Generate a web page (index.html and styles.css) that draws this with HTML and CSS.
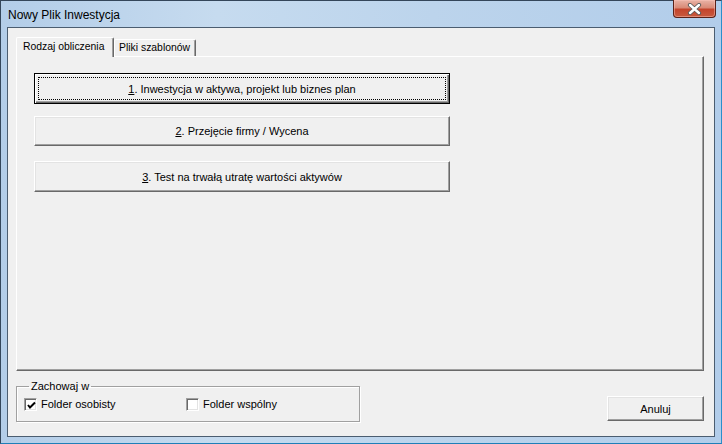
FILE: index.html
```html
<!DOCTYPE html>
<html lang="pl">
<head>
<meta charset="utf-8">
<title>Nowy Plik Inwestycja</title>
<link rel="stylesheet" href="styles.css">
</head>
<body>
<div class="window">
  <div class="titlebar">
    <span class="title">Nowy Plik Inwestycja</span>
  </div>
  <button class="close" aria-label="Zamknij">
    <svg width="17" height="12" viewBox="0 0 17 12">
      <path d="M4 2 L13 10 M13 2 L4 10" stroke="#5a5a5a" stroke-width="4.2" stroke-linecap="round" fill="none"/>
      <path d="M4 2 L13 10 M13 2 L4 10" stroke="#ffffff" stroke-width="2.4" stroke-linecap="round" fill="none"/>
    </svg>
  </button>
  <div class="client">
    <div class="tabs">
      <div class="tab active">Rodzaj obliczenia</div>
      <div class="tab">Pliki szablonów</div>
    </div>
    <div class="panel">
      <button class="btn wide focused"><span class="focus"><u>1</u>. Inwestycja w aktywa, projekt lub biznes plan</span></button>
      <button class="btn wide second"><u>2</u>. Przejęcie firmy / Wycena</button>
      <button class="btn wide third"><u>3</u>. Test na trwałą utratę wartości aktywów</button>
    </div>
    <div class="bottom">
      <fieldset class="group">
        <legend>Zachowaj w</legend>
        <label class="check first">
          <span class="box">
            <svg width="9" height="9" viewBox="0 0 9 9"><path d="M1 4 L3 6.5 L8 1.5" stroke="#000" stroke-width="2" fill="none"/></svg>
          </span>
          Folder osobisty
        </label>
        <label class="check second-check">
          <span class="box"></span>
          Folder wspólny
        </label>
      </fieldset>
      <button class="btn cancel">Anuluj</button>
    </div>
  </div>
</div>
</body>
</html>
```

FILE: styles.css
```css
html, body {
  margin: 0;
  padding: 0;
  background: #f0f0f0;
}

.window {
  position: relative;
  box-sizing: border-box;
  width: 722px;
  height: 444px;
  border: 1px solid #34465a;
  border-bottom-color: #1f7fb8;
  border-right-color: #2a8fcc;
  padding: 0 6px 6px 6px;
  background: linear-gradient(to right, #b3cde8 0%, #c6dbef 30%, #bcd4ec 60%, #b2cdea 100%);
  display: flex;
  flex-direction: column;
  font-family: "Liberation Sans", Arial, sans-serif;
  font-size: 11px;
  color: #000;
}

.titlebar {
  height: 26px;
  display: flex;
  align-items: center;
  flex: none;
}

.title {
  font-family: "Liberation Sans", Arial, sans-serif;
  font-size: 12px;
  color: #000;
  margin-left: 1px;
  margin-top: 2px;
}

.close {
  position: absolute;
  top: -1px;
  right: 5px;
  width: 43px;
  height: 18px;
  padding: 0;
  border: 1px solid #5a2118;
  border-top: none;
  border-radius: 0 0 4px 4px;
  background: linear-gradient(to bottom, #e9b3a6 0%, #d98a77 45%, #c4442c 55%, #c85a3e 100%);
  box-shadow: inset 0 0 0 1px rgba(255, 200, 190, 0.45);
  display: flex;
  align-items: center;
  justify-content: center;
}

.client {
  flex: 1;
  border: 1px solid #4b5d70;
  background: #f0f0f0;
  padding: 9px 0 0 8px;
  display: flex;
  flex-direction: column;
}

.tabs {
  height: 19px;
  display: flex;
  align-items: flex-end;
  position: relative;
  z-index: 1;
  font-size: 10.4px;
}

.tab {
  box-sizing: border-box;
  height: 17px;
  border-top: 1px solid #fff;
  border-left: 1px solid #fff;
  border-right: 1px solid #696969;
  box-shadow: inset -1px 0 0 #a0a0a0;
  border-radius: 2px 2px 0 0;
  padding: 2px 0 0 4px;
  width: 82px;
  background: #f0f0f0;
  white-space: nowrap;
  overflow: hidden;
}

.tab.active {
  height: 20px;
  width: 98px;
  margin-bottom: -1px;
  padding: 3px 0 0 6px;
}

.panel {
  box-sizing: border-box;
  width: 688px;
  height: 315px;
  border-top: 1px solid #fff;
  border-left: 1px solid #fff;
  border-right: 1px solid #696969;
  border-bottom: 1px solid #696969;
  box-shadow: inset -1px -1px 0 #a0a0a0;
  padding: 16px 0 0 17px;
  display: flex;
  flex-direction: column;
  align-items: flex-start;
}

.btn {
  box-sizing: border-box;
  font-family: "Liberation Sans", Arial, sans-serif;
  font-size: 11px;
  color: #000;
  background: #f0f0f0;
  border-top: 1px solid #fff;
  border-left: 1px solid #fff;
  border-right: 1px solid #696969;
  border-bottom: 1px solid #696969;
  box-shadow: inset -1px -1px 0 #a0a0a0, inset 1px 1px 0 #e3e3e3;
  padding: 0;
  margin: 0;
  display: flex;
  align-items: center;
  justify-content: center;
}

.btn.wide {
  width: 416px;
  height: 31px;
}

.btn.focused {
  border: 1px solid #000;
  box-shadow: inset 1px 1px 0 #fff, inset -1px -1px 0 #696969, inset -2px -2px 0 #a0a0a0;
  padding: 3px;
}

.focus {
  box-sizing: border-box;
  width: 100%;
  height: 100%;
  border: 1px dotted #000;
  display: flex;
  align-items: center;
  justify-content: center;
}

.btn.second {
  margin-top: 12px;
  height: 30px;
}

.btn.third {
  margin-top: 15px;
  height: 31px;
}

.bottom {
  width: 688px;
  margin-top: 9px;
  display: flex;
  justify-content: space-between;
  align-items: flex-start;
}

.group {
  box-sizing: border-box;
  width: 344px;
  height: 42px;
  margin: 0;
  padding: 5px 0 0 7px;
  border: 1px solid #a0a0a0;
  box-shadow: 1px 1px 0 #fff, inset 1px 1px 0 #fff;
  display: flex;
  align-items: flex-start;
  min-width: 0;
}

.group legend {
  padding: 0 2px;
  margin-left: 5px;
  line-height: 13px;
}

.check {
  display: flex;
  align-items: center;
  gap: 4px;
  line-height: 13px;
}

.check.second-check {
  margin-left: 36px;
}

.check.first {
  width: 126px;
}

.box {
  box-sizing: border-box;
  width: 13px;
  height: 13px;
  background: #fff;
  border-top: 1px solid #a0a0a0;
  border-left: 1px solid #a0a0a0;
  border-right: 1px solid #fff;
  border-bottom: 1px solid #fff;
  box-shadow: inset 1px 1px 0 #696969, inset -1px -1px 0 #e3e3e3;
  display: flex;
  align-items: center;
  justify-content: center;
  padding: 1px 0 0 1px;
}

.btn.cancel {
  width: 97px;
  height: 25px;
  margin-top: 16px;
}
```
